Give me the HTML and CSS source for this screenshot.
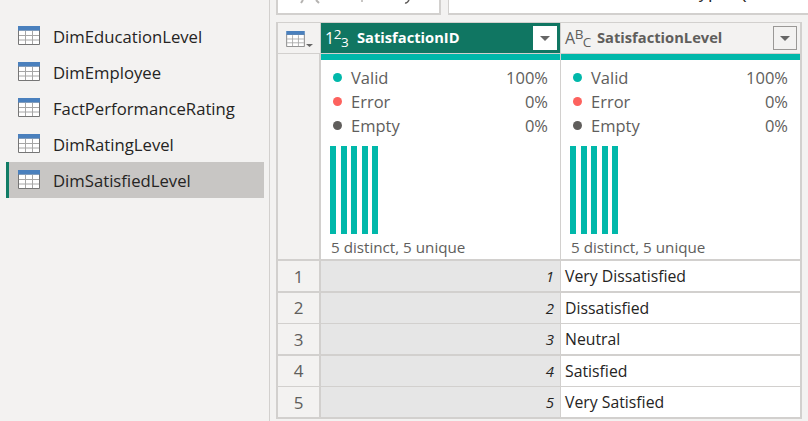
FILE: index.html
```html
<!DOCTYPE html>
<html lang="en">

<head>
  <meta charset="UTF-8">
  <title>Power Query Editor</title>
  <link rel="stylesheet" href="styles.css">
</head>

<body>

  <svg class="defs" width="0" height="0">
    <symbol id="table-icon" viewBox="0 0 22 19">
      <path d="M.5 4v14.500h21V4z" fill="#fff" stroke="#767676"/>
      <path d="M7.500 5v13M14.500 5v13M1 9.500h20M1 14h20" fill="none" stroke="#a6a6a6"/>
      <rect x="0" y="0" width="22" height="4.500" fill="#4a80bd"/>
    </symbol>
  </svg>

  <aside class="sidebar">
    <ul class="query-list">
      <li class="query-item"><svg class="table-icon"><use href="#table-icon"/></svg>DimEducationLevel</li>
      <li class="query-item"><svg class="table-icon"><use href="#table-icon"/></svg>DimEmployee</li>
      <li class="query-item"><svg class="table-icon"><use href="#table-icon"/></svg>FactPerformanceRating</li>
      <li class="query-item"><svg class="table-icon"><use href="#table-icon"/></svg>DimRatingLevel</li>
      <li class="query-item selected"><svg class="table-icon"><use href="#table-icon"/></svg>DimSatisfiedLevel</li>
    </ul>
  </aside>

  <main class="content">
    <div class="formula-row">
      <div class="formula-buttons">
        <svg class="formula-icons" width="160" height="4" viewBox="0 0 160 4">
          <path d="M23 3l2-3M38 0l3 3" fill="none" stroke="#b5b3b1" stroke-width="2"/>
          <path d="M84 0v2" fill="none" stroke="#c8c6c4" stroke-width="2"/>
          <path d="M127 3c2 .5 3-1 4-3" fill="none" stroke="#605e5c" stroke-width="1.500"/>
        </svg>
      </div>
      <div class="formula-input"><span class="formula-text">= Table.TransformColumnTypes(</span></div>
    </div>

    <div class="grid">
      <div class="grid-head">
        <div class="corner">
          <svg class="corner-icon" width="27" height="16" viewBox="0 0 27 16">
            <use href="#table-icon" width="19" height="16"/>
            <path d="M20 13h7l-3.500 3z" fill="#666"/>
          </svg>
        </div>

        <div class="col-head active">
          <span class="type-icon">1<sup>2</sup><sub>3</sub></span>
          <span class="col-name">SatisfactionID</span>
          <span class="col-menu"></span>
        </div>
        <div class="col-head">
          <span class="type-icon">A<sup>B</sup><sub>C</sub></span>
          <span class="col-name">SatisfactionLevel</span>
          <span class="col-menu"></span>
        </div>

        <div class="gutter"></div>

        <div class="profile">
          <div class="quality-bar"></div>
          <div class="stats">
            <div class="stat"><i class="dot valid"></i>Valid<b>100%</b></div>
            <div class="stat"><i class="dot error"></i>Error<b>0%</b></div>
            <div class="stat"><i class="dot empty"></i>Empty<b>0%</b></div>
          </div>
          <div class="bars"><i></i><i></i><i></i><i></i><i></i></div>
          <div class="distinct">5 distinct, 5 unique</div>
        </div>
        <div class="profile">
          <div class="quality-bar"></div>
          <div class="stats">
            <div class="stat"><i class="dot valid"></i>Valid<b>100%</b></div>
            <div class="stat"><i class="dot error"></i>Error<b>0%</b></div>
            <div class="stat"><i class="dot empty"></i>Empty<b>0%</b></div>
          </div>
          <div class="bars"><i></i><i></i><i></i><i></i><i></i></div>
          <div class="distinct">5 distinct, 5 unique</div>
        </div>
      </div>

      <div class="grid-rows">
        <div class="row-num">1</div><div class="cell-num">1</div><div class="cell-text">Very Dissatisfied</div>
        <div class="row-num">2</div><div class="cell-num">2</div><div class="cell-text">Dissatisfied</div>
        <div class="row-num">3</div><div class="cell-num">3</div><div class="cell-text">Neutral</div>
        <div class="row-num">4</div><div class="cell-num">4</div><div class="cell-text">Satisfied</div>
        <div class="row-num">5</div><div class="cell-num">5</div><div class="cell-text">Very Satisfied</div>
      </div>
    </div>
  </main>

</body>

</html>
```

FILE: styles.css
```css
html, body {
  height: 100%;
}
body {
  margin: 0;
  display: flex;
  overflow: hidden;
  background-color: #f3f2f1;
  color: #252423;
  font-family: "Open Sans", "Noto Sans", sans-serif;
}
.defs {
  position: absolute;
}
.sidebar {
  width: 270px;
  flex: none;
  box-sizing: border-box;
  padding: 18px 5px 0 6px;
  border-right: 1px solid #d2d0ce;
}
.query-list {
  margin: 0;
  padding: 0;
  list-style: none;
}
.query-item {
  height: 36px;
  display: flex;
  align-items: center;
  gap: 13px;
  padding-left: 12px;
  box-sizing: border-box;
  font-size: 16.700px;
}
.query-item.selected {
  background-color: #c8c6c4;
  border-left: 3px solid #107c65;
  padding-left: 9px;
}
.table-icon {
  width: 22px;
  height: 19px;
  flex: none;
  margin-top: -1px;
}
.content {
  flex: 1;
  padding-left: 6px;
}
.formula-row {
  height: 22px;
  display: flex;
  gap: 7px;
  box-sizing: border-box;
  padding-bottom: 7px;
}
.formula-buttons, .formula-input {
  background-color: #fff;
  border: 2px solid #d2d0ce;
  border-top: none;
}
.formula-buttons {
  width: 165px;
  box-sizing: border-box;
}
.formula-icons {
  display: block;
}
.formula-input {
  flex: 1;
  display: flex;
  align-items: flex-end;
  overflow: hidden;
  padding: 0 0 8px 4px;
  border-right: none;
  border-left-width: 1px;
}
.formula-text {
  font-family: "Liberation Mono", monospace;
  font-size: 17px;
  line-height: 20px;
  white-space: pre;
}
.grid {
  width: 526px;
  padding: 0 2px 2px;
  box-sizing: border-box;
  background-color: #d2d0ce;
  border-top: 1px solid #d2d0ce;
}
.grid-head, .grid-rows {
  display: grid;
  grid-template-columns: 42px 239px 239px;
  column-gap: 1px;
}
.grid-head {
  grid-template-rows: 30px 205px;
  row-gap: 1px;
  margin-bottom: 2px;
}
.grid-rows {
  grid-auto-rows: 30px;
  row-gap: 1.500px;
}
.corner {
  display: flex;
  align-items: center;
  padding-left: 8px;
  background-color: #f3f2f1;
}
.corner-icon {
  margin-top: 1px;
}
.col-head {
  display: flex;
  align-items: center;
  padding: 0 3px 0 4px;
  background-color: #f3f2f1;
  color: #605e5c;
}
.col-head.active {
  background-color: #107662;
  color: #fff;
}
.type-icon {
  width: 32px;
  font-size: 16px;
  letter-spacing: -.5px;
  flex: none;
  line-height: 1;
  white-space: nowrap;
}
.type-icon sup, .type-icon sub {
  font-size: 13.500px;
  line-height: 0;
}
.type-icon sup {
  vertical-align: 5px;
}
.type-icon sub {
  vertical-align: -3px;
}
.col-name {
  flex: 1;
  margin-bottom: 2px;
  font-size: 14.700px;
  font-weight: 700;
}
.col-menu {
  width: 24px;
  height: 24px;
  box-sizing: border-box;
  display: flex;
  align-items: center;
  justify-content: center;
  border: 1px solid #9a9896;
}
.active .col-menu {
  background-color: #fff;
  border-color: #fff;
}
.col-menu::after {
  content: "";
  border: 5px solid transparent;
  border-top: 5px solid #666;
  border-bottom: none;
}
.gutter {
  background-color: #f3f2f1;
  border-right: 1px solid #d2d0ce;
}
.profile {
  background-color: #fff;
  color: #605e5c;
}
.quality-bar {
  height: 6px;
  background-color: #00b8aa;
}
.stats {
  padding: 5px 12px 0 12px;
}
.stat {
  height: 24px;
  display: flex;
  align-items: center;
  font-size: 16.500px;
}
.stat b {
  margin-left: auto;
  font-weight: 400;
}
.dot {
  width: 9px;
  height: 9px;
  border-radius: 50%;
  margin-right: 9px;
}
.dot.valid {
  background-color: #00b8aa;
}
.dot.error {
  background-color: #fd625e;
}
.dot.empty {
  background-color: #605e5c;
}
.bars {
  display: flex;
  gap: 4.500px;
  height: 88px;
  margin: 9px 0 0 9px;
}
.bars i {
  width: 6px;
  background-color: #00b8aa;
}
.distinct {
  padding: 3px 0 0 10px;
  font-size: 15.200px;
  line-height: 20px;
}
.row-num {
  display: flex;
  align-items: center;
  justify-content: center;
  background-color: #f3f2f1;
  border-right: 1px solid #d2d0ce;
  color: #605e5c;
  font-size: 17px;
}
.cell-num {
  display: flex;
  align-items: center;
  justify-content: flex-end;
  padding-right: 6px;
  background-color: #e6e6e6;
  font-size: 15px;
  font-style: italic;
}
.cell-text {
  display: flex;
  align-items: center;
  padding-left: 4px;
  background-color: #fff;
  font-size: 15.800px;
}
```
